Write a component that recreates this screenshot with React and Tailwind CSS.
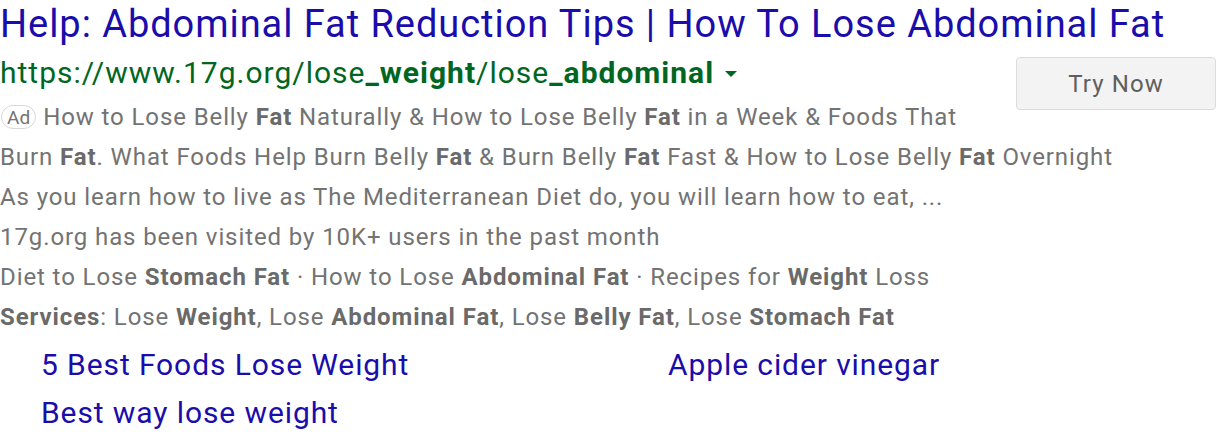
const B = ({ children }) => <b className="font-bold text-[#6a6a6a]">{children}</b>;

export default function App() {
  return (
    <div className="w-[1216px] h-[442px] bg-white overflow-hidden font-['Roboto',sans-serif]">
      <a className="block text-[38px] leading-[48px] tracking-[0.95px] text-[#1a0dab] whitespace-nowrap">
        Help: Abdominal Fat Reduction Tips | How To Lose Abdominal Fat
      </a>

      <div className="flex justify-between">
        <div className="flex-1">
          <div className="flex items-center h-[48px] text-[30px] tracking-[1px] text-[#006621] whitespace-nowrap">
            <span>
              https://www.17g.org/lose<b>_weight</b>/lose<b>_abdominal</b>
            </span>
            <span className="ml-[11px] mt-[4px] w-0 h-0 border-x-[6px] border-x-transparent border-t-[6px] border-t-[#006621]" />
          </div>
        </div>
        <button className="mt-[9px] w-[200px] h-[53px] rounded-[4px] border border-[#dcdcdc] bg-[#f3f3f3] text-[24px] tracking-[1.1px] text-[#5f5f5f]">
          Try Now
        </button>
      </div>

      <div className="-mt-[13px] text-[24px] leading-[40px] tracking-[0.9px] text-[#737373] whitespace-nowrap">
        <div className="flex items-center">
          <span className="mr-[7px] ml-[1px] flex h-[24px] items-center rounded-[12px] border border-[#d8d8d8] px-[5px] text-[19px] tracking-normal leading-none">
            Ad
          </span>
          <span>
            How to Lose Belly <B>Fat</B> Naturally &amp; How to Lose Belly <B>Fat</B> in a Week &amp; Foods That
          </span>
        </div>
        <div>
          Burn <B>Fat</B>. What Foods Help Burn Belly <B>Fat</B> &amp; Burn Belly <B>Fat</B> Fast &amp; How to Lose Belly <B>Fat</B> Overnight
        </div>
        <div>As you learn how to live as The Mediterranean Diet do, you will learn how to eat, ...</div>
        <div>17g.org has been visited by 10K+ users in the past month</div>
        <div>
          Diet to Lose <B>Stomach Fat</B> · How to Lose <B>Abdominal Fat</B> · Recipes for <B>Weight</B> Loss
        </div>
        <div>
          <B>Services</B>: Lose <B>Weight</B>, Lose <B>Abdominal Fat</B>, Lose <B>Belly Fat</B>, Lose <B>Stomach Fat</B>
        </div>
      </div>

      <div className="mt-[4px] ml-[41px] grid grid-cols-[627px_1fr] text-[30px] leading-[48px] tracking-[0.9px] text-[#1a0dab] whitespace-nowrap">
        <a>5 Best Foods Lose Weight</a>
        <a>Apple cider vinegar</a>
        <a>Best way lose weight</a>
      </div>
    </div>
  );
}
